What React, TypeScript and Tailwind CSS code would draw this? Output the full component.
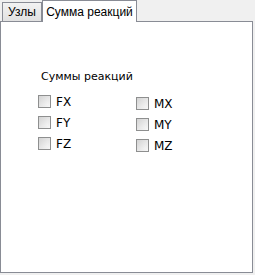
const Box = ({ label }: { label: string }) => (
  <label className="flex items-center h-[13px] gap-[5px]">
    <span className="w-[13px] h-[13px] border border-[#8e8f8f] bg-gradient-to-br from-[#d4d4d4] to-[#f8f8f8] p-[2px]">
      <span className="block w-full h-full bg-gradient-to-br from-[#dadada] to-[#f4f4f4]" />
    </span>
    <span className="text-[12px] leading-none text-black">{label}</span>
  </label>
);

const App = () => {
  return (
    <div
      className="w-[255px] h-[275px] bg-[#f0f0f0] flex flex-col"
      style={{ fontFamily: '"DejaVu Sans", sans-serif' }}
    >
      <div className="flex items-end h-[21px] pl-[2px] font-['Liberation_Sans',sans-serif] text-[12px]">
        <div className="h-[19px] w-[40px] border border-b-0 border-[#898c95] bg-gradient-to-b from-[#f2f2f2] to-[#e1e1e1] flex items-center justify-center">
          Узлы
        </div>
        <div className="h-[22px] w-[95px] -mb-[1px] relative z-10 border border-b-0 border-[#898c95] bg-white flex items-center justify-center">
          Сумма реакций
        </div>
      </div>
      <div className="w-[253px] h-[252px] border border-[#898c95] bg-white pl-[37px] pt-[49px]">
        <div className="text-[11px] leading-[12px] pl-[3px]">Суммы реакций</div>
        <div className="flex mt-[12px]">
          <div className="flex flex-col gap-[8px] w-[98px]">
            <Box label="FX" />
            <Box label="FY" />
            <Box label="FZ" />
          </div>
          <div className="flex flex-col gap-[8px] mt-[2px]">
            <Box label="MX" />
            <Box label="MY" />
            <Box label="MZ" />
          </div>
        </div>
      </div>
    </div>
  );
};

export default App;
